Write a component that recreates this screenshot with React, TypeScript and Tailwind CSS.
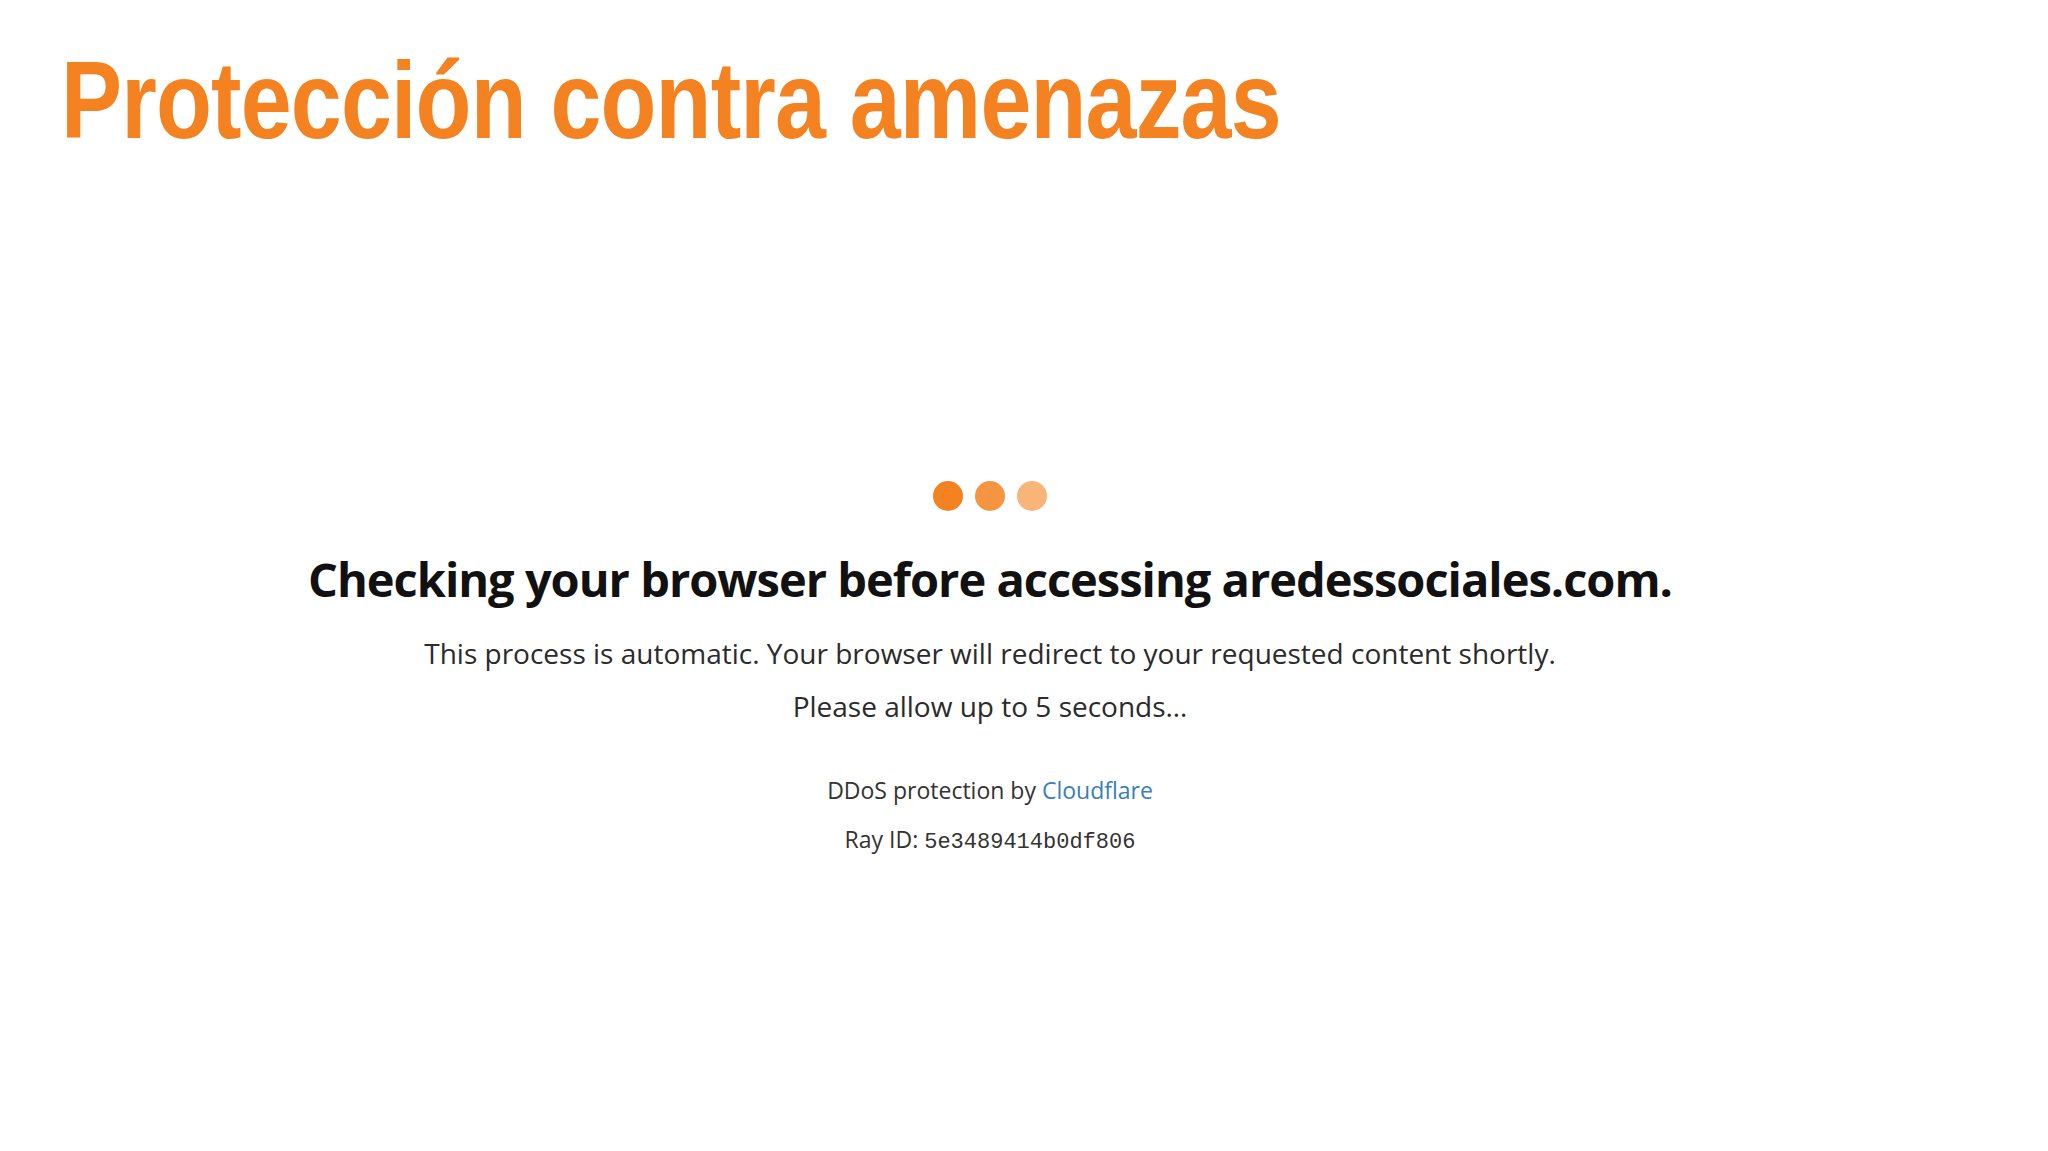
import React from "react";

export default function App() {
  return (
    <div className="min-h-[1151px] w-full bg-white flex flex-col">
      <div className="pt-[46px] pl-[61px] h-[155px]">
        <h2
          className="inline-block origin-left scale-x-[0.84] text-[109px] leading-none font-bold text-[#f48220] whitespace-nowrap tracking-[-1px]"
          style={{ fontFamily: '"Liberation Sans", Arial, sans-serif' }}
        >
          Protección contra amenazas
        </h2>
      </div>

      <div className="flex flex-col items-center pr-[68px]" style={{ fontFamily: '"Open Sans", "Noto Sans", sans-serif' }}>
        <div className="mt-[326px] flex items-center gap-[12px]">
          <span className="block w-[30px] h-[30px] rounded-full bg-[#f48220]" />
          <span className="block w-[30px] h-[30px] rounded-full bg-[#f48220] opacity-[0.85]" />
          <span className="block w-[30px] h-[30px] rounded-full bg-[#f48220] opacity-[0.6]" />
        </div>

        <h1 className="mt-[39px] text-[47px] leading-[58.8px] font-bold tracking-[-1px] text-[#111] whitespace-nowrap">
          Checking your browser before accessing aredessociales.com.
        </h1>

        <p className="mt-[18px] text-[28px] leading-[53px] text-[#2b2b2b] whitespace-nowrap">
          This process is automatic. Your browser will redirect to your requested content shortly.
        </p>
        <p className="text-[28px] leading-[53px] text-[#2b2b2b] whitespace-nowrap">
          Please allow up to 5 seconds…
        </p>

        <p className="mt-[33px] text-[23px] leading-[49px] text-[#333] whitespace-nowrap">
          DDoS protection by <a className="text-[#3b7fb8]">Cloudflare</a>
        </p>
        <p className="text-[23px] leading-[49px] text-[#333] whitespace-nowrap">
          Ray ID:{" "}
          <code className="text-[22px]" style={{ fontFamily: '"Liberation Mono", "DejaVu Sans Mono", monospace' }}>5e3489414b0df806</code>
        </p>
      </div>
    </div>
  );
}
